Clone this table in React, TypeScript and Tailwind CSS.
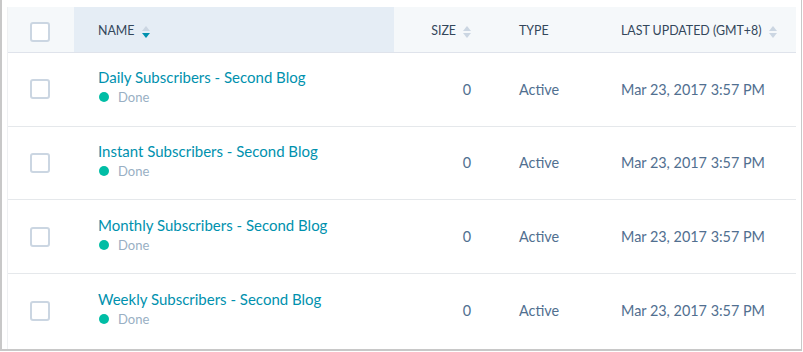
const rows = [
  "Daily Subscribers - Second Blog",
  "Instant Subscribers - Second Blog",
  "Monthly Subscribers - Second Blog",
  "Weekly Subscribers - Second Blog",
];

function SortIcon({ active = false }: { active?: boolean }) {
  return (
    <svg width="8" height="12" viewBox="0 0 8 12" className="ml-[7px] shrink-0">
      <path d="M4 0 L8 5 L0 5 Z" fill="#cbd6e2" />
      <path d="M0 7 L8 7 L4 12 Z" fill={active ? "#0091ae" : "#cbd6e2"} />
    </svg>
  );
}

function Checkbox() {
  return <div className="w-5 h-5 rounded-[3px] border-2 border-[#cbd6e2] bg-white" />;
}

export default function App() {
  return (
    <div
      className="w-[803px] h-[352px] bg-white overflow-hidden"
      style={{ fontFamily: "Lato, 'Open Sans', sans-serif" }}
    >
      <div className="w-[802px] h-[351px] border-l-2 border-r border-b-2 border-[#c8c8c8] pl-[5px] pt-[7px] pr-[5px]">
        <div className="h-full border-l border-[#eef0f2] text-[#33475b]">
          {/* header */}
          <div className="flex h-[46px] bg-[#f5f8fa] border-b border-[#dfe3eb] text-[12.4px] uppercase">
            <div className="w-[66px] flex items-center pl-[22px] pt-[5px]">
              <Checkbox />
            </div>
            <div className="w-[320px] bg-[#e5edf5] flex items-center pl-[24px] pt-[4px]">
              NAME
              <SortIcon active />
            </div>
            <div className="w-[101px] flex items-center justify-end pr-[24px] pt-[4px]">
              SIZE
              <SortIcon />
            </div>
            <div className="w-[102px] flex items-center pl-[24px] pt-[4px]">TYPE</div>
            <div className="flex-1 flex items-center pl-[24px] pt-[4px]">
              LAST UPDATED (GMT+8)
              <SortIcon />
            </div>
          </div>
          {/* rows */}
          {rows.map((name, i) => (
            <div
              key={name}
              className={`flex h-[73.7px] ${i < rows.length - 1 ? "border-b border-[#e5e8eb]" : ""}`}
            >
              <div className="w-[66px] flex items-center pl-[22px]">
                <Checkbox />
              </div>
              <div className="w-[320px] flex flex-col justify-center pl-[24px] pb-[4px]">
                <span className="text-[15px] text-[#0091ae] leading-[20px]">{name}</span>
                <span className="flex items-center text-[13px] text-[#99afc4] leading-[20px]">
                  <span className="w-[10px] h-[10px] rounded-full bg-[#00bda5] mr-[9px] ml-[1px]" />
                  Done
                </span>
              </div>
              <div className="w-[101px] flex items-center justify-end pr-[24px] text-[14.4px] text-[#516f90]">
                0
              </div>
              <div className="w-[102px] flex items-center pl-[24px] text-[14.4px] text-[#516f90]">
                Active
              </div>
              <div className="flex-1 flex items-center pl-[24px] text-[14.4px] text-[#516f90]">
                Mar 23, 2017 3:57 PM
              </div>
            </div>
          ))}
        </div>
      </div>
    </div>
  );
}
